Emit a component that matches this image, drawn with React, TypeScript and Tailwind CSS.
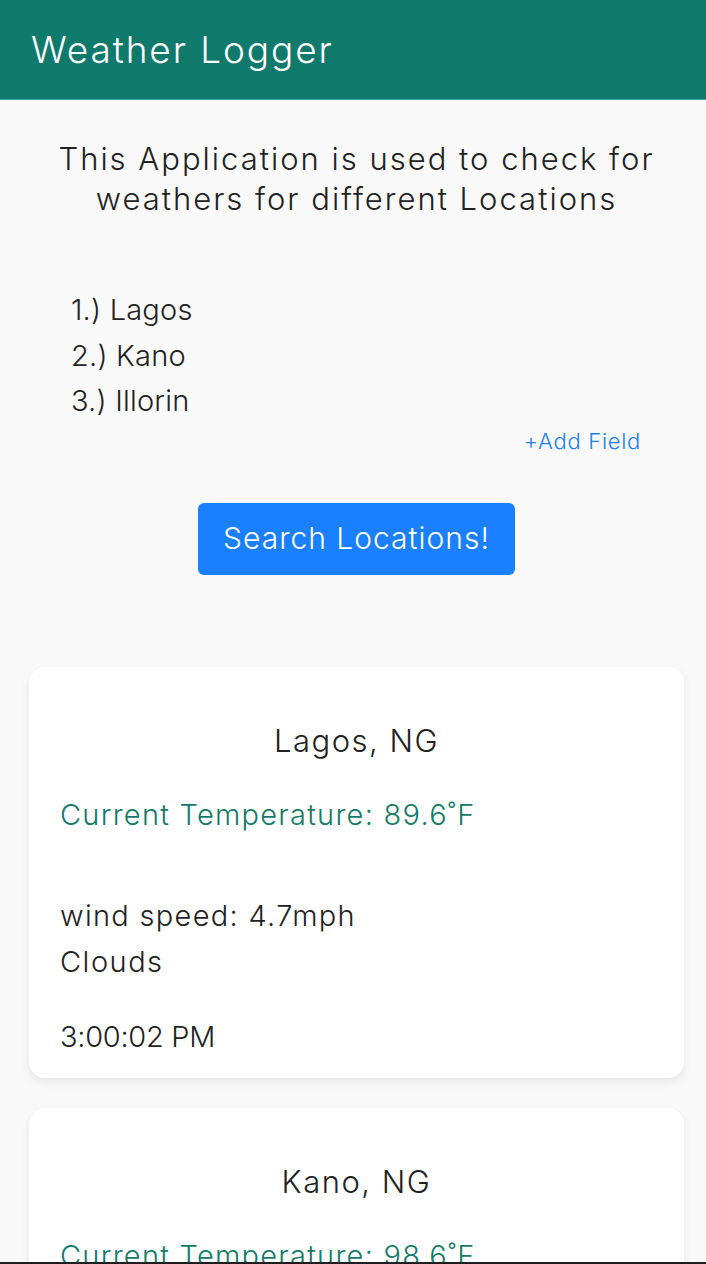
import React from "react";

const font = { fontFamily: "Inter, 'Noto Sans', sans-serif" };

function Card({ city, temp, wind, weather, time }: { city: string; temp: string; wind: string; weather: string; time: string }) {
  return (
    <div className="bg-white rounded-[16px] shadow-[0_4px_10px_rgba(0,0,0,0.08)] px-[31px] pt-[52px] pb-[21px]">
      <div className="text-center text-[31px] leading-[44px] tracking-[1.5px] text-[#222] font-light">{city}</div>
      <div className="mt-[31px] text-[29px] leading-[42px] tracking-[1.25px] text-[#137a68] font-light">Current Temperature: {temp}</div>
      <div className="mt-[57px] text-[29px] leading-[46px] tracking-[1.3px] text-[#222] font-light">{wind}</div>
      <div className="text-[29px] leading-[46px] tracking-[1.5px] text-[#222] font-light">{weather}</div>
      <div className="mt-[32px] text-[29px] leading-[40px] tracking-[-0.3px] text-[#222] font-light">{time}</div>
    </div>
  );
}

export default function App() {
  return (
    <div style={font} className="h-[1264px] overflow-hidden bg-[#f9f9f9] border-b-2 border-[#1e1e1e]">
      <header className="h-[100px] bg-[#0f7a6b] flex items-center px-[31px] border-b border-[#4fa597]">
        <h1 className="text-white text-[37px] tracking-[1.9px] font-light">Weather Logger</h1>
      </header>
      <main className="pl-[29px] pr-[22px]">
        <p className="mt-[39px] text-center text-[31px] leading-[40px] tracking-[2px] text-[#222] font-light">
          This Application is used to check for
          <br />
          weathers for different Locations
        </p>
        <ul className="mt-[68px] pl-[42px] text-[29px] leading-[45.5px] tracking-[0.2px] text-[#222] font-light">
          <li>1.) Lagos</li>
          <li>2.) Kano</li>
          <li>3.) Illorin</li>
        </ul>
        <div className="mt-[3px] flex justify-end pr-[43px] text-[22px] leading-[28px] tracking-[0.7px] text-[#1a7ffb] font-light">+Add Field</div>
        <div className="mt-[48px] flex justify-center">
          <button className="w-[317px] h-[72px] rounded-[6px] bg-[#1a80ff] text-white text-[30px] tracking-[1px] font-light">Search Locations!</button>
        </div>
        <div className="mt-[92px] flex flex-col gap-[30px]">
          <Card city="Lagos, NG" temp="89.6˚F" wind="wind speed: 4.7mph" weather="Clouds" time="3:00:02 PM" />
          <Card city="Kano, NG" temp="98.6˚F" wind="wind speed: 3.2mph" weather="Clear" time="3:00:02 PM" />
        </div>
      </main>
    </div>
  );
}
